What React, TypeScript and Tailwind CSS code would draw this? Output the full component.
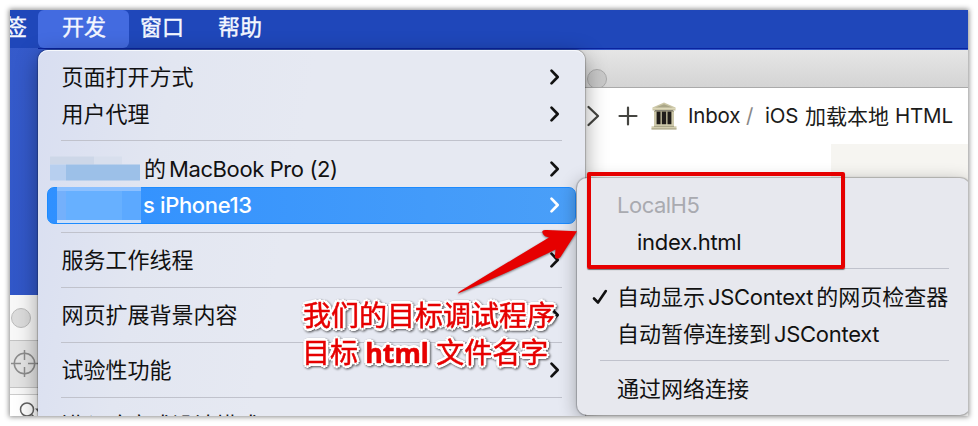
import React from "react";

const UI = "font-['Inter','Noto_Sans_CJK_SC',sans-serif]";

function Chevron({ color = "#111", className = "" }: { color?: string; className?: string }) {
  return (
    <svg width="12" height="18" viewBox="0 0 12 18" fill="none" className={className}>
      <path d="M2.5 2.6 L8.7 9 L2.5 15.4" stroke={color} strokeWidth="2.7" strokeLinecap="round" strokeLinejoin="round" />
    </svg>
  );
}

function Row({ children, arrow = true }: { children: React.ReactNode; arrow?: boolean }) {
  return (
    <div className="flex h-[36.7px] shrink-0 items-center justify-between pr-[24px] pl-[23.4px]">
      <span className="flex items-center">{children}</span>
      {arrow && <Chevron />}
    </div>
  );
}

function Divider({ className = "" }: { className?: string }) {
  return (
    <div className={`flex h-[18.3px] shrink-0 items-start pt-[8px] ${className}`}>
      <div className="h-px w-full bg-[#c0c2cc]" />
    </div>
  );
}

function DevelopMenu() {
  return (
    <div className="absolute top-[40px] left-[28px] flex h-[420px] w-[547px] flex-col rounded-[10px] bg-[linear-gradient(100deg,#d8def1_0%,#e2e6f1_22%,#e6e9f2_45%,#e6e9f2_100%)] pt-[8.5px] text-[22px] leading-none text-[#111] shadow-[0_0_1px_1px_rgba(0,0,0,0.22),0_6px_22px_rgba(0,0,0,0.38),inset_0_1px_0_#f6f8fc]">
      <Row>页面打开方式</Row>
      <Row>用户代理</Row>
      <Divider className="px-[23px]" />
      <div className="flex h-[36.7px] shrink-0 items-center justify-between pr-[24px] pl-[12px]">
        <span className="flex items-center">
          <span className="flex w-[90px] translate-y-[-0.5px] flex-col">
            <span className="flex h-[8px]">
              <span className="w-[44px] bg-[#cdd7e8]" />
              <span className="w-[28px] bg-[#d8dfed]" />
            </span>
            <span className="flex h-[16px]">
              <span className="w-[16px] bg-[#b7cfef]" />
              <span className="grow bg-[#9cc0e8]" />
            </span>
          </span>
          <span className="pl-[4px]">的</span>
          <span className="pl-[3px] tracking-[-0.4px]">MacBook Pro (2)</span>
        </span>
        <Chevron />
      </div>
      <div className="mr-[9px] ml-[9px] flex h-[36.7px] shrink-0 items-center justify-between rounded-[7px] border border-[#1c8bff] bg-linear-to-r from-[#2f90ff] to-[#4a9ff8] pr-[14px] pl-[9px]">
        <span className="flex h-full items-center">
          <span className="flex h-[36px] w-[84px] shrink-0 flex-col">
            <span className="h-[4px] bg-[#8cc0ff]" />
            <span className="flex grow">
              <span className="w-[9px] bg-[#74b0fb]" />
              <span className="w-[56px] bg-[#67b0ff]" />
              <span className="grow bg-[#5ca9ff]" />
            </span>
            <span className="h-[3px] bg-[#cfe0f8]" />
          </span>
          <span className="pl-[2px] font-medium tracking-[-0.35px] text-white">s iPhone13</span>
        </span>
        <Chevron color="#fff" />
      </div>
      <Divider className="px-[23px]" />
      <Row>服务工作线程</Row>
      <Divider className="px-[23px]" />
      <Row>网页扩展背景内容</Row>
      <Divider className="px-[23px]" />
      <Row>试验性功能</Row>
      <Divider className="px-[23px]" />
      <Row arrow={false}>进入响应式设计模式</Row>
    </div>
  );
}

function Submenu() {
  return (
    <div className="absolute top-[168px] left-[567px] flex h-[237px] w-[393px] flex-col rounded-[10px] bg-[#e7e8ee] pt-[9px] text-[22px] leading-none text-[#111] shadow-[0_0_1px_1px_rgba(0,0,0,0.22),0_4px_18px_rgba(0,0,0,0.32)]">
      <div className="flex h-[36.7px] shrink-0 items-center pl-[40px] tracking-[-0.5px] text-[#a9aab0]">LocalH5</div>
      <div className="flex h-[36.7px] shrink-0 items-center pl-[60px] tracking-[-0.3px]">index.html</div>
      <Divider className="pr-[21px] pl-[23px]" />
      <div className="flex h-[36.7px] shrink-0 items-center pl-[13px]">
        <svg width="20" height="20" viewBox="0 0 20 20" fill="none">
          <path d="M4 11.5 L8 15.5 L15.8 4" stroke="#111" strokeWidth="2.6" strokeLinecap="round" strokeLinejoin="round" />
        </svg>
        <span className="pl-[7px]">自动显示</span>
        <span className="pl-[3px] tracking-[-0.3px]">JSContext</span>
        <span className="pl-[3px]">的网页检查器</span>
      </div>
      <div className="flex h-[36.7px] shrink-0 items-center pl-[40px]">
        <span>自动暂停连接到</span>
        <span className="pl-[3px] tracking-[-0.3px]">JSContext</span>
      </div>
      <Divider className="pr-[21px] pl-[23px]" />
      <div className="flex h-[36.7px] shrink-0 items-center pl-[40px]">通过网络连接</div>
    </div>
  );
}

function MuseumIcon() {
  return (
    <svg width="26" height="28" viewBox="0 0 26 28">
      <path d="M13 0.5 L24.5 5.5 V8.5 H1.5 V5.5 Z" fill="#cbc6a6" />
      <path d="M13 2.3 L21.5 5.6 H4.5 Z" fill="#a9a587" />
      <path d="M1.5 6.3 H24.5" stroke="#e6e1c4" strokeWidth="0.8" />
      <rect x="4" y="8.5" width="18" height="14.5" fill="#1f1c1a" />
      <path d="M4.3 9 V23 M21.7 9 V23" stroke="#cdc8aa" strokeWidth="2.6" />
      <path d="M10.2 9 V23 M15.8 9 V23" stroke="#aba68b" strokeWidth="1.6" />
      <path d="M3 9.2 H23" stroke="#99947a" strokeWidth="1" />
      <path d="M3 22.3 H23 V24.3 H25.5 V27.5 H0.5 V24.3 H3 Z" fill="#d2cdaf" />
      <path d="M0.5 26.9 H25.5 M3 24.4 H23" stroke="#a29d81" strokeWidth="0.9" />
    </svg>
  );
}

function NotesWindow() {
  return (
    <div className="absolute top-[40px] left-[560px] flex h-[366px] w-[398px] flex-col bg-white">
      <div className="flex h-[38px] shrink-0 items-end overflow-hidden border-b border-[#aaa] bg-linear-to-b from-[#e6e6e6] to-[#d4d4d4] pl-[17px]">
        <div className="-mb-[2px] size-[20px] shrink-0 rounded-full border border-[#aaa] bg-[#c9c9c9]" />
      </div>
      <div className="flex h-[56px] shrink-0 items-center text-[20.5px] leading-none whitespace-nowrap text-[#1c1c1a]">
        <svg width="14" height="24" viewBox="0 0 14 24" fill="none" className="ml-[16px]">
          <path d="M2.5 3 L12 12 L2.5 21" stroke="#454541" strokeWidth="2.3" strokeLinecap="round" strokeLinejoin="round" />
        </svg>
        <svg width="22" height="22" viewBox="0 0 22 22" fill="none" className="ml-[17px]">
          <path d="M11 2.5 V19.5 M2.5 11 H19.5" stroke="#454541" strokeWidth="2.2" strokeLinecap="round" />
        </svg>
        <span className="ml-[12px]"><MuseumIcon /></span>
        <span className="ml-[11px] w-[54px] tracking-[-0.2px]">Inbox</span>
        <span className="ml-[4px] w-[8px] text-[#888]">/</span>
        <span className="ml-[11px] w-[34px] tracking-[-0.2px]">iOS</span>
        <span className="ml-[6px] w-[84px] text-[21px]">加载本地</span>
        <span className="ml-[6px] tracking-[-0.2px]">HTML</span>
      </div>
      <div className="ml-auto h-[60px] w-[137px] bg-[#f6f5f1]" />
    </div>
  );
}

function InspectorWindow() {
  return (
    <div className="absolute top-[285px] left-0 flex h-[121px] w-[60px] flex-col bg-[#f8f8f8]">
      <div className="flex h-[45px] shrink-0 items-center pl-[1px]">
        <div className="size-[20px] rounded-full border border-[#bbb] bg-[#dcdcdc]" />
      </div>
      <div className="flex h-[48px] shrink-0 items-center border-y border-[#c3c3c3] bg-[#e4e4e4]">
        <svg width="28" height="28" viewBox="0 0 28 28" fill="none" stroke="#8c8c8c" strokeWidth="1.5" className="shrink-0">
          <circle cx="14.5" cy="13.5" r="10.2" />
          <path d="M14.5 0 V10 M14.5 17 V27 M1 13.5 H11 M18 13.5 H28" />
        </svg>
      </div>
      <div className="mt-[6px] flex h-[40px] border-t-[1.5px] border-[#ccc] bg-white pt-[6px] pl-[9px]">
        <svg width="22" height="20" viewBox="0 0 22 20" fill="none" stroke="#626262" strokeWidth="1.5" className="shrink-0">
          <circle cx="8" cy="8.5" r="6.5" />
          <path d="M12.5 13.5 L17 18" />
          <path d="M16 7.5 H22 L19 11 Z" fill="#626262" stroke="none" />
        </svg>
      </div>
    </div>
  );
}

const CALLOUT = "absolute text-[28px] leading-[37px] whitespace-nowrap text-[#e60000] font-['Noto_Sans','Noto_Sans_CJK_SC',sans-serif] [-webkit-text-stroke:0.5px_#e60000] [text-shadow:3px_0_0_#fff,-3px_0_0_#fff,0_3px_0_#fff,0_-3px_0_#fff,2px_2px_0_#fff,-2px_2px_0_#fff,2px_-2px_0_#fff,-2px_-2px_0_#fff,1px_0_0_#fff,-1px_0_0_#fff] [filter:drop-shadow(1px_1px_1px_rgba(0,0,0,0.65))]";

export default function App() {
  return (
    <div className={`h-[426px] w-[978px] overflow-hidden bg-white pt-[10px] pl-[10px] ${UI}`}>
      <div className="h-[406px] w-[958px] shadow-[0_0_5px_1px_rgba(0,0,0,0.45)]">
        <div className="relative h-full w-full overflow-hidden bg-linear-to-b from-[#365bcb] to-[#2f55c6]">
          <div className="flex h-[38px] items-center bg-[#1f47ba] text-[22px] leading-none whitespace-nowrap text-[#f4f7ff] [-webkit-text-stroke:0.4px_#f4f7ff]">
            <span className="-ml-[5px] w-[33px] pb-[4px]">签</span>
            <span className="flex h-full w-[91px] items-center rounded-[6px] bg-[#436be0] pb-[4px] pl-[24px]">开发</span>
            <span className="ml-[11px] w-[78px] pb-[4px]">窗口</span>
            <span className="pb-[4px]">帮助</span>
          </div>
          <NotesWindow />
          <InspectorWindow />
          <div className="absolute top-[38px] left-[28px] h-px w-[930px] bg-[#0a24a0]" />
          <DevelopMenu />
          <Submenu />
          <div className="absolute top-[162px] left-[577px] h-[97px] w-[258px] rounded-[2px] border-4 border-[#e60000] shadow-[0_1px_1px_rgba(0,0,0,0.5)]" />
          <svg width="140" height="80" viewBox="440 222 140 80" className="absolute top-[212px] left-[430px] [filter:drop-shadow(0_1px_1px_rgba(0,0,0,0.5))]">
            <path d="M458 293.5 Q458 292 462 290 Q505 264 549 237.5 L545 236.3 Q541.5 233 542.5 231 Q543.5 229.5 547 230 L577 231.3 L560.5 257 Q558 260 555.5 258 Q554.5 257 555 255 L555.5 249.5 Q510 272 458 293.5 Z" fill="#e60000" />
          </svg>
          <div className={`${CALLOUT} top-[287px] left-[293px]`}>我们的目标调试程序</div>
          <div className={`${CALLOUT} top-[324px] left-[292px]`}>
            目标 <b className="text-[27px] font-bold">html</b> 文件名字
          </div>
        </div>
      </div>
    </div>
  );
}
